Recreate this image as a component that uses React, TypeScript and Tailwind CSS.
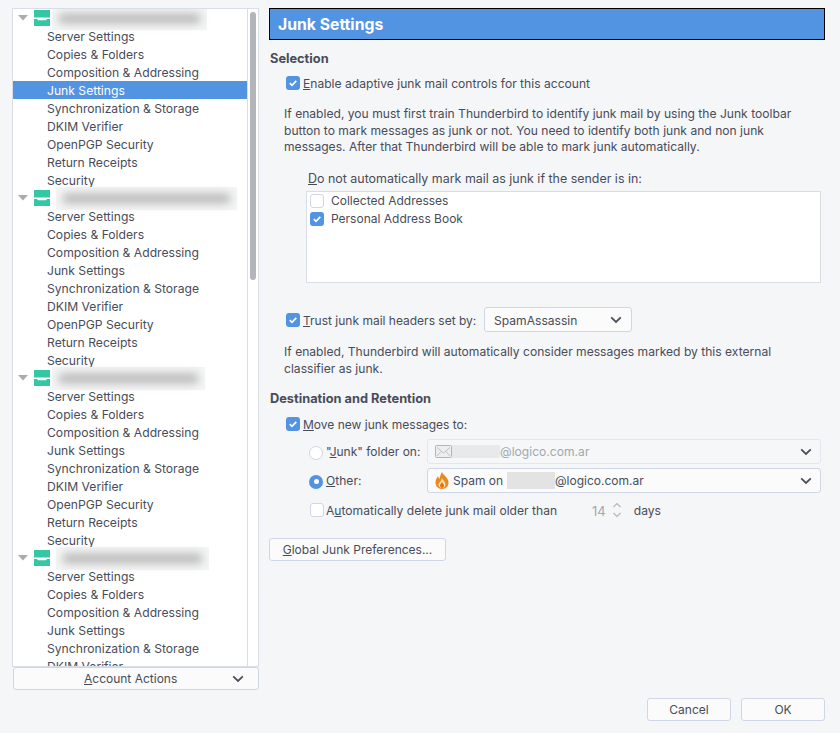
import React from "react";

const items = ["Server Settings","Copies & Folders","Composition & Addressing","Junk Settings","Synchronization & Storage","DKIM Verifier","OpenPGP Security","Return Receipts","Security"];

function Check({ on }: { on?: boolean }) {
  return on ? (
    <span className="flex h-[14px] w-[14px] shrink-0 items-center justify-center rounded-[3px] bg-[#5294e2]">
      <svg width="10" height="10" viewBox="0 0 10 10" fill="none"><path d="M1.8 5.2 4 7.4 8.3 2.8" stroke="#fff" strokeWidth="1.7" /></svg>
    </span>
  ) : (
    <span className="h-[14px] w-[14px] shrink-0 rounded-[3px] border border-[#cfd6e6] bg-white" />
  );
}

function Chevron({ color = "#4b4f58" }: { color?: string }) {
  return <svg width="12" height="8" viewBox="0 0 12 8" fill="none"><path d="M1.2 1.4 6 6 10.8 1.4" stroke={color} strokeWidth="1.8" /></svg>;
}

function Account({ blurW, blurX, selected }: { blurW: number; blurX: number; selected?: boolean }) {
  return (
    <div>
      <div className="relative flex h-[18px] items-center">
        <svg className="ml-[5px]" width="11" height="6" viewBox="0 0 11 6"><path d="M0 0h10L5 5.500z" fill="#a9abb0" /></svg>
        <svg className="ml-[5px]" width="16" height="16" viewBox="0 0 16 16"><path d="M0 0h16v7.500H0z" fill="#33c7a4" /><path d="M0 9h3l1 1.200h8L13 9h3v7H0z" fill="#33c7a4" /></svg>
        <div className="absolute top-[-2px] h-[23px] bg-[#f4f6f5]" style={{ left: blurX, width: blurW }}>
          <div className="mx-[6px] mt-[6px] h-[11px] rounded-full bg-[#bdbdbd] blur-[4px]" />
        </div>
      </div>
      {items.map((t) => (
        <div key={t} className={`flex h-[18px] items-center pl-[34px] pt-[2px] text-[12.15px] ${selected && t === "Junk Settings" ? "bg-[#5294e2] text-white" : ""}`}>{t}</div>
      ))}
    </div>
  );
}

function Select({ children, className = "" }: { children: React.ReactNode; className?: string }) {
  return <div className={`flex items-center justify-between rounded-[3px] border ${className}`}>{children}</div>;
}

export default function App() {
  return (
    <div className="flex h-[733px] w-[840px] overflow-hidden whitespace-nowrap bg-[#f5f6f8] text-[12.1px] leading-[18px] text-[#484c59] [font-family:Inter,sans-serif]">
      <div className="ml-[12px] mt-[8px] flex w-[247px] shrink-0 flex-col">
        <div className="flex h-[659px] overflow-hidden border border-[#d9dde6] bg-white">
          <div className="h-full w-[234px] shrink-0 overflow-hidden">
            <Account blurW={155} blurX={39} selected />
            <Account blurW={181} blurX={43} />
            <Account blurW={153} blurX={39} />
            <Account blurW={153} blurX={43} />
          </div>
          <div className="flex-1 border-l border-[#d9dde6] bg-white pl-[2px] pt-[3px]">
            <div className="h-[268px] w-[6px] rounded-[3px] bg-[#b3b5ba]" />
          </div>
        </div>
        <div className="ml-[1px] flex h-[23px] w-[246px] items-center rounded-[3px] border border-[#cfd6e6] bg-[#fbfbfc] text-[12px]">
          <span className="ml-[70px]"><span className="underline">A</span>ccount Actions</span>
          <span className="ml-[55px] flex"><Chevron /></span>
        </div>
      </div>

      <div className="ml-[10px] flex w-[556px] shrink-0 flex-col">
        <div className="mt-[8px] flex h-[32px] items-center border border-black bg-[#5294e2] pl-[8px] pt-[2px] text-[15.75px] font-bold text-white">Junk Settings</div>
        <div className="ml-[1px] mt-[10px] h-[18px] text-[12.8px] font-bold">Selection</div>

        <div className="ml-[17px] mt-[6px] flex h-[18px] items-center gap-[3px]"><Check on /><span className="pt-[2px]"><span className="underline">E</span>nable adaptive junk mail controls for this account</span></div>
        <p className="ml-[15px] mt-[14px] h-[50px] w-[530px] whitespace-normal leading-[16.5px]">If enabled, you must first train Thunderbird to identify junk mail by using the Junk toolbar button to mark messages as junk or not. You need to identify both junk and non junk messages. After that Thunderbird will be able to mark junk automatically.</p>
        <div className="ml-[39px] mt-[14px] h-[18px] text-[12.45px]"><span className="underline">D</span>o not automatically mark mail as junk if the sender is in:</div>
        <div className="ml-[37px] mt-[3px] h-[92px] w-[515px] border border-[#d9dde6] bg-white pl-[3px] text-[12px]">
          <div className="flex h-[18px] items-center gap-[7px]"><Check /><span>Collected Addresses</span></div>
          <div className="flex h-[18px] items-center gap-[7px]"><Check on /><span>Personal Address Book</span></div>
        </div>

        <div className="ml-[17px] mt-[24px] flex h-[25px] items-center">
          <Check on />
          <span className="ml-[3px] w-[173px] shrink-0 pt-[2px] text-[12px]"><span className="underline">T</span>rust junk mail headers set by:</span>
          <Select className="ml-[8px] h-[25px] w-[148px] border-[#cfd6e6] bg-[#fbfbfc] pl-[9px] pr-[9px]"><span className="pt-[2px]">SpamAssassin</span><Chevron /></Select>
        </div>
        <p className="ml-[15px] mt-[12px] h-[33px] w-[530px] whitespace-normal leading-[16.5px]">If enabled, Thunderbird will automatically consider messages marked by this external classifier as junk.</p>
        <div className="ml-[1px] mt-[13px] h-[18px] text-[12.8px] font-bold">Destination and Retention</div>
        <div className="ml-[17px] mt-[7px] flex h-[18px] items-center gap-[3px]"><Check on /><span className="pt-[1px] text-[12px]"><span className="underline">M</span>ove new junk messages to:</span></div>

        <div className="mt-[6px] flex h-[25px] items-center">
          <span className="ml-[40px] mt-[2px] h-[14px] w-[14px] shrink-0 rounded-full border border-[#cfd6e6] bg-white" />
          <span className="ml-[3px] w-[101px] pt-[1px] text-[12px]">"<span className="underline">J</span>unk" folder on:</span>
          <Select className="h-[25px] w-[394px] border-[#e3e6ee] bg-[#f6f7f9] pl-[7px] pr-[8px] text-[#a4a7ae]">
            <span className="flex items-center">
              <svg width="17" height="13" viewBox="0 0 17 13" fill="none"><rect x=".5" y=".5" width="16" height="12" rx="1" fill="#eeeeef" stroke="#b4b4b4" /><path d="M2 2.500 8.500 8 15 2.500M2 11l4-4.500M15 11l-4-4.500" stroke="#b4b4b4" strokeWidth=".8" /></svg>
              <span className="h-[13px] w-[48px] bg-[#e8e9ea]" />
              <span className="pt-[1px]">@logico.com.ar</span>
            </span>
            <Chevron />
          </Select>
        </div>
        <div className="mt-[4px] flex h-[25px] items-center">
          <span className="ml-[40px] mt-[2px] flex h-[14px] w-[14px] shrink-0 items-center justify-center rounded-full bg-[#5294e2]"><span className="h-[5px] w-[5px] rounded-full bg-white" /></span>
          <span className="ml-[3px] w-[101px] pt-[1px]"><span className="underline">O</span>ther:</span>
          <Select className="h-[25px] w-[394px] border-[#cfd6e6] bg-[#fbfbfc] pl-[7px] pr-[8px]">
            <span className="flex items-center">
              <svg width="14" height="17" viewBox="0 0 14 17"><path d="M7 0c1 3 6 5 6.500 10C13.800 14 11 17 7 17S.3 14 .5 10C.7 7 2.300 5.500 3 4c.3 1.500.7 2.200 1.500 2.800C5 4.500 6 2 7 0z" fill="#e98a1f" /><path d="M7 6c.6 2 3.500 3.500 3.500 6.500C10.500 14.500 9 16 7 16s-3.500-1.500-3.500-3.500C3.500 11 5 10.500 5.500 9.500 6.300 8.500 6.800 7 7 6z" fill="#fbe3b4" /><path d="M7 10c.5 1.200 2 2 2 3.500S8 16 7 16s-2-1-2-2.500S6.500 11.200 7 10z" fill="#ef6c1a" /></svg>
              <span className="ml-[4px] w-[47px] pt-[1px] text-[12px]">Spam on</span>
              <span className="ml-[7px] h-[17px] w-[48px] bg-[#e3e3e4]" />
              <span className="pt-[1px] text-[12px]">@logico.com.ar</span>
            </span>
            <Chevron />
          </Select>
        </div>
        <div className="mt-[4px] flex h-[25px] items-center pt-[1px]">
          <span className="ml-[41px] flex shrink-0"><Check /></span>
          <span className="ml-[2px] pt-[2px]">A<span className="underline">u</span>tomatically delete junk mail older than</span>
          <span className="ml-[35px] pt-[2px] text-[13px] text-[#a4a7ae]">14</span>
          <svg className="ml-[5px]" width="12" height="18" viewBox="0 0 12 18" fill="none"><path d="M2.500 6 6 2.500 9.500 6M2.500 12 6 15.500 9.500 12" stroke="#b5b7bc" strokeWidth="1.200" /></svg>
          <span className="ml-[11px] pt-[2px]">days</span>
        </div>
        <div className="mt-[16px] flex h-[23px] w-[177px] items-center justify-center rounded-[3px] border border-[#cfd6e6] bg-[#fbfbfc] pt-[1px] text-[12px]"><span><span className="underline">G</span>lobal Junk Preferences...</span></div>
        <div className="mt-[137px] flex justify-end gap-[10px] text-[12px]">
          <div className="flex h-[23px] w-[84px] items-center justify-center rounded-[3px] border border-[#cfd6e6] bg-[#fbfbfc] pt-[1px]">Cancel</div>
          <div className="flex h-[23px] w-[84px] items-center justify-center rounded-[3px] border border-[#cfd6e6] bg-[#fbfbfc] pt-[1px]">OK</div>
        </div>
      </div>
    </div>
  );
}
